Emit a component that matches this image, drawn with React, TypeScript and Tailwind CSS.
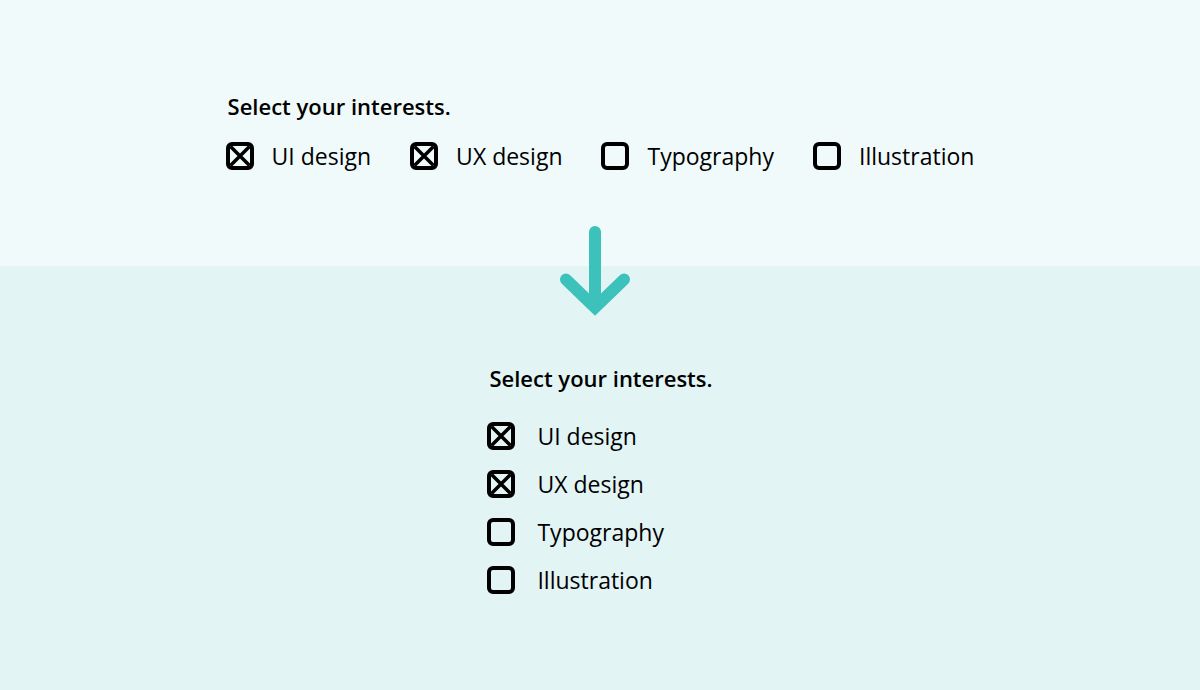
import React from "react";

const CheckBox = ({ checked }: { checked: boolean }) => (
  <svg width="28" height="28" viewBox="0 0 28 28" className="shrink-0">
    <rect x="2" y="2" width="24" height="24" rx="4" fill="none" stroke="#000" strokeWidth="4" />
    {checked && (
      <path d="M4.5 4.5 L23.5 23.5 M23.5 4.5 L4.5 23.5" stroke="#000" strokeWidth="3.5" strokeLinecap="butt" />
    )}
  </svg>
);

const items = [
  { label: "UI design", checked: true },
  { label: "UX design", checked: true },
  { label: "Typography", checked: false },
  { label: "Illustration", checked: false },
];

export default function App() {
  return (
    <div
      className="w-full h-[690px] flex flex-col items-center bg-[linear-gradient(to_bottom,#f0fafa_266px,#e2f4f4_266px)] text-black"
      style={{ fontFamily: "'Open Sans', 'Noto Sans', sans-serif" }}
    >
      <div className="pt-[92px] flex flex-col">
        <div className="text-[22px] leading-[28px] font-semibold pl-[2px]">Select your interests.</div>
        <div className="mt-[22px] flex items-center gap-[39px]">
          {items.map((it) => (
            <div key={it.label} className="flex items-center gap-[18px]">
              <CheckBox checked={it.checked} />
              <span className="text-[23px] leading-[28px]">{it.label}</span>
            </div>
          ))}
        </div>
      </div>
      <svg width="80" height="100" viewBox="0 0 80 100" className="mt-[56px] mr-[10px]">
        <path d="M40 6 L40 80" stroke="#3cc1bb" strokeWidth="12" strokeLinecap="round" fill="none" />
        <path d="M11 53.5 L40 81.5 L69 53.5" stroke="#3cc1bb" strokeWidth="12" strokeLinecap="round" strokeLinejoin="miter" fill="none" />
      </svg>
      <div className="mt-[38px] flex flex-col">
        <div className="text-[22px] leading-[28px] font-semibold pl-[2px]">Select your interests.</div>
        <div className="mt-[30px] flex flex-col gap-[20px]">
          {items.map((it) => (
            <div key={it.label} className="flex items-center gap-[22px]">
              <CheckBox checked={it.checked} />
              <span className="text-[23px] leading-[28px]">{it.label}</span>
            </div>
          ))}
        </div>
      </div>
    </div>
  );
}
